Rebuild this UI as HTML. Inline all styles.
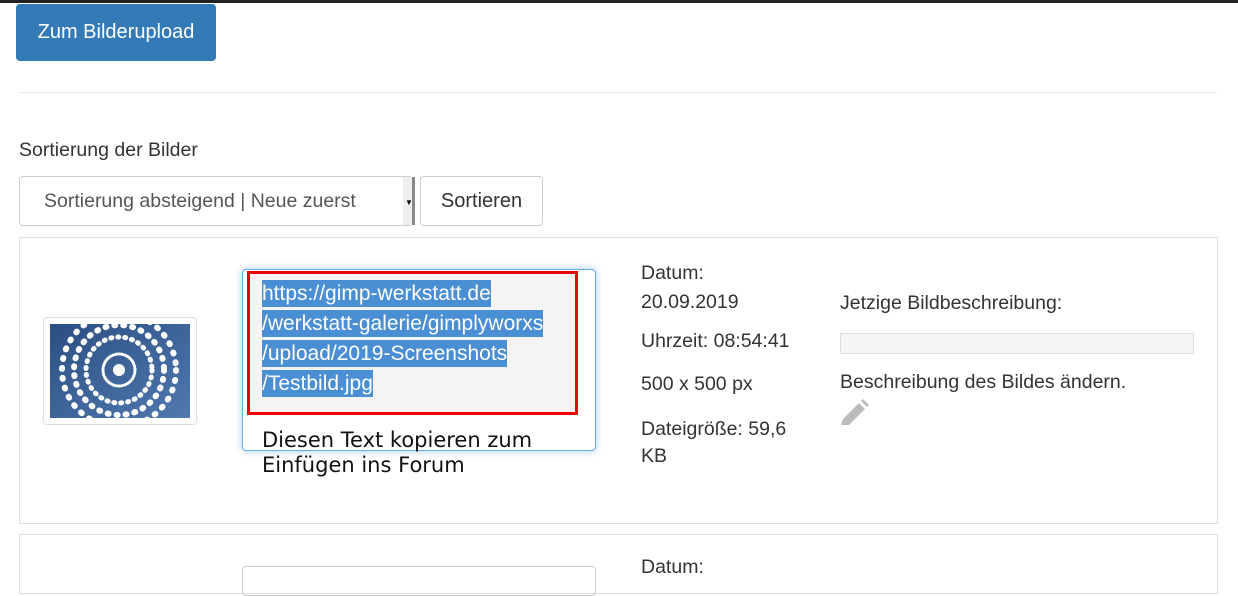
<!DOCTYPE html>
<html><head><meta charset="utf-8"><style>
body{margin:0;width:1238px;height:578px;overflow:hidden;background:#fff;font-family:"Liberation Sans",sans-serif;color:#333;position:relative}
.a{position:absolute}
.t{font-size:19.5px;white-space:nowrap}
</style></head><body>
<div class="a" style="left:0;top:0;width:1238px;height:3px;background:#222"></div>
<div class="a" style="left:16px;top:4px;width:200px;height:57px;background:#337ab7;border-radius:4px;color:#fff;font-size:20px;line-height:57px;text-align:center">Zum Bilderupload</div>
<div class="a" style="left:19px;top:92px;width:1198px;height:1px;background:#e8e8e8"></div>
<div class="a t" style="left:19px;top:139px">Sortierung der Bilder</div>
<div class="a" style="left:19px;top:176px;width:394px;height:50px;border:1px solid #ccc;border-radius:4px;box-sizing:border-box"></div>
<div class="a t" style="left:44px;top:190px;color:#555">Sortierung absteigend | Neue zuerst</div>
<div class="a" style="left:403px;top:177px;width:9px;height:48px;background:#eee;border-right:3px solid #888"></div>
<div class="a" style="left:405px;top:198px;font-size:8px;color:#000">▼</div>
<div class="a" style="left:420px;top:176px;width:123px;height:50px;border:1px solid #ccc;border-radius:4px;box-sizing:border-box;font-size:20px;line-height:48px;text-align:center">Sortieren</div>
<div class="a" style="left:19px;top:237px;width:1199px;height:287px;border:1px solid #ddd;box-sizing:border-box"></div>
<div class="a" style="left:43px;top:317px;width:154px;height:108px;border:1px solid #ddd;border-radius:4px;box-sizing:border-box"></div>
<svg class="a" style="left:50px;top:324px" width="140" height="94" viewBox="0 0 140 94">
<defs><linearGradient id="g" x1="0" y1="0" x2="1" y2="1"><stop offset="0" stop-color="#2c4f82"/><stop offset="1" stop-color="#5079b0"/></linearGradient></defs>
<rect width="140" height="94" fill="url(#g)"/>
<g fill="none" stroke="#fff" stroke-linecap="round">
<circle cx="69" cy="46" r="16" stroke-width="3" stroke-dasharray="1 2"/>
<circle cx="69" cy="46" r="33" stroke-width="5" stroke-dasharray="1 6"/>
<circle cx="69" cy="46" r="45" stroke-width="6" stroke-dasharray="1 8"/>
<circle cx="69" cy="46" r="57" stroke-width="6" stroke-dasharray="1 9"/>
</g>
<circle cx="69" cy="46" r="6" fill="#fff"/>
</svg>
<div class="a" style="left:242px;top:269px;width:354px;height:182px;border:1px solid #66afe9;border-radius:4px;box-sizing:border-box;box-shadow:0 0 8px rgba(102,175,233,.6);background:#fff"></div>
<div class="a" style="left:247px;top:271px;width:331px;height:144px;border:3px solid #e00;box-sizing:border-box;background:#f4f4f4"></div>
<div class="a" style="left:262px;top:279px;font-size:21px;line-height:30px;color:#fff;white-space:nowrap">
<span style="background:#4a8fd4;padding:2px 0">https://gimp-werkstatt.de</span><br>
<span style="background:#4a8fd4;padding:2px 0">/werkstatt-galerie/gimplyworxs</span><br>
<span style="background:#4a8fd4;padding:2px 0">/upload/2019-Screenshots</span><br>
<span style="background:#4a8fd4;padding:2px 0">/Testbild.jpg</span></div>
<div class="a" style="left:262px;top:428px;font-family:'DejaVu Sans',sans-serif;font-size:21px;line-height:25px;color:#111;white-space:nowrap">Diesen Text kopieren zum<br>Einfügen ins Forum</div>
<div class="a t" style="left:641px;top:259px;line-height:29px">Datum:<br>20.09.2019</div>
<div class="a t" style="left:641px;top:330px">Uhrzeit: 08:54:41</div>
<div class="a t" style="left:641px;top:373px">500 x 500 px</div>
<div class="a t" style="left:641px;top:416px;line-height:27px">Dateigröße: 59,6<br>KB</div>
<div class="a t" style="left:840px;top:292px">Jetzige Bildbeschreibung:</div>
<div class="a" style="left:840px;top:333px;width:354px;height:21px;background:#f5f5f5;border:1px solid #ddd;box-sizing:border-box"></div>
<div class="a t" style="left:840px;top:371px">Beschreibung des Bildes ändern.</div>
<svg class="a" style="left:838px;top:398px" width="32" height="32" viewBox="0 0 32 32"><path d="M3 27 L5 21 L21 5 L27 11 L11 27 Z" fill="#bbb"/><path d="M23 3 L25 1 L31 7 L29 9 Z" fill="#bbb"/></svg>
<div class="a" style="left:19px;top:534px;width:1199px;height:60px;border:1px solid #ddd;box-sizing:border-box"></div>
<div class="a" style="left:242px;top:566px;width:354px;height:30px;border:1px solid #ccc;border-radius:4px;box-sizing:border-box"></div>
<div class="a t" style="left:641px;top:556px">Datum:</div>
</body></html>
